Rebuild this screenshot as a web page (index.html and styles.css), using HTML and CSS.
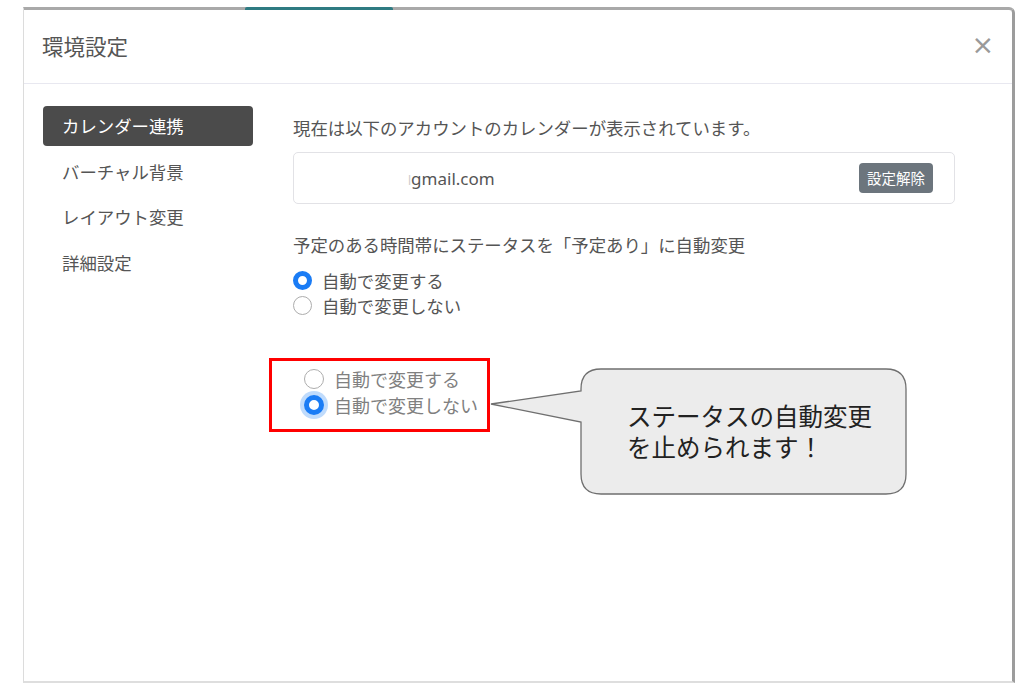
FILE: index.html
```html
<!DOCTYPE html>
<html lang="ja">
<head>
<meta charset="utf-8">
<link rel="stylesheet" href="styles.css">
</head>
<body>
<div class="modal">
  <div class="tab-accent"></div>
  <div class="modal-header">
    <div class="modal-title">環境設定</div>
    <div class="close">×</div>
  </div>
  <div class="modal-body">
    <nav class="sidebar">
      <div class="nav-item active">カレンダー連携</div>
      <div class="nav-item">バーチャル背景</div>
      <div class="nav-item">レイアウト変更</div>
      <div class="nav-item">詳細設定</div>
    </nav>
    <div class="content">
      <p class="text">現在は以下のアカウントのカレンダーが表示されています。</p>
      <div class="account">
        <span class="email"><span class="cut">l</span>gmail.com</span>
        <span class="btn">設定解除</span>
      </div>
      <p class="text label">予定のある時間帯にステータスを「予定あり」に自動変更</p>
      <div class="radios">
        <div class="radio-row"><span class="radio checked"></span><span>自動で変更する</span></div>
        <div class="radio-row"><span class="radio"></span><span>自動で変更しない</span></div>
      </div>
      <div class="highlight">
        <div class="radios light">
          <div class="radio-row"><span class="radio"></span><span>自動で変更する</span></div>
          <div class="radio-row"><span class="radio checked focus"></span><span>自動で変更しない</span></div>
        </div>
      </div>
    </div>
  </div>
</div>
<div class="callout">
  <svg class="callout-shape" width="420" height="130" viewBox="488 366 420 130">
    <path d="M581,391 L581,389 Q581,369 601,369 L886,369 Q906,369 906,389 L906,474 Q906,494 886,494 L601,494 Q581,494 581,474 L581,422 L491,404 Z" fill="#ececec" stroke="#6f6f6f" stroke-width="1.3"/>
  </svg>
  <div class="callout-text">
    <div>ステータスの自動変更</div>
    <div>を止められます！</div>
  </div>
</div>
</body>
</html>
```
FILE: styles.css
```css
* { box-sizing: border-box; }
html, body { margin: 0; padding: 0; background: #fff; }
body {
  font-family: "Noto Sans CJK JP", "Noto Sans", sans-serif;
  color: #555;
  width: 1024px;
  height: 697px;
  position: relative;
  overflow: hidden;
}
.modal {
  position: relative;
  margin: 7px 0 0 23px;
  width: 992px;
  height: 676px;
  background: #fff;
  border-top: 3px solid #a9a9a9;
  border-right: 3px solid #9c9c9c;
  border-left: 1px solid #dcdcdc;
  border-bottom: 2px solid #dedede;
  border-top-right-radius: 6px;
}
.tab-accent {
  position: absolute;
  top: -3px;
  left: 221px;
  width: 148px;
  height: 3px;
  background: #2e7b82;
  border-radius: 2px 2px 0 0;
}
.modal-header {
  height: 74px;
  border-bottom: 1px solid #e8e8f0;
  display: flex;
  align-items: center;
  justify-content: space-between;
  padding: 0 18px 0 18px;
}
.modal-title {
  font-size: 21.5px;
  color: #555;
  padding-bottom: 3px;
}
.close {
  font-family: "DejaVu Sans", sans-serif;
  font-size: 27px;
  color: #9a9a9a;
  line-height: 1;
  padding-bottom: 4px;
}
.modal-body {
  display: flex;
  padding: 22px 0 0 19px;
}
.sidebar {
  width: 210px;
  display: flex;
  flex-direction: column;
  gap: 5.5px;
}
.nav-item {
  height: 40px;
  line-height: 40px;
  padding-left: 19px;
  font-size: 17.4px;
  color: #555;
  border-radius: 4px;
}
.nav-item.active {
  background: #4b4b4b;
  color: #fff;
}
.content {
  margin-left: 40px;
  width: 662px;
  padding-top: 10px;
}
.text {
  margin: 0;
  font-size: 17.4px;
  line-height: 24px;
  color: #555;
}
.account {
  margin-top: 12px;
  height: 52px;
  border: 1px solid #e2e2e6;
  border-radius: 5px;
  display: flex;
  align-items: center;
  justify-content: space-between;
  padding: 0 21px 0 114px;
}
.email {
  font-family: "Noto Sans", sans-serif;
  font-size: 17px;
  color: #555;
}
.cut { color: #ccc; font-size: 12px; }
.btn {
  background: #6c757d;
  color: #fff;
  font-size: 14.5px;
  height: 30px;
  line-height: 30px;
  padding: 0 8px;
  border-radius: 4px;
}
.label { margin-top: 29px; }
.radios { margin-top: 11px; }
.radio-row {
  display: flex;
  align-items: center;
  height: 25px;
  font-size: 17.4px;
  color: #555;
}
.radio {
  width: 19px;
  height: 19px;
  border-radius: 50%;
  border: 1px solid #adadad;
  background: #fff;
  margin-right: 10px;
  flex: none;
}
.radio.checked {
  border: 5.5px solid #1a7cf5;
  background: #fff;
}
.radio.focus {
  box-shadow: 0 0 0 4px rgba(26, 124, 245, 0.28);
}
.highlight {
  margin: 40px 0 0 -24px;
  width: 221px;
  height: 74px;
  border: 3px solid #f00;
  padding: 5px 0 0 32px;
}
.radios.light { margin-top: 0; }
.radios.light .radio-row { height: 26px; color: #808080; font-size: 18px; }
.radios.light .radio { width: 20px; height: 20px; }
.callout {
  position: absolute;
  left: 488px;
  top: 366px;
  width: 420px;
  height: 130px;
}
.callout-shape { display: block; }
.callout-text {
  position: absolute;
  left: 139px;
  top: 34px;
  font-size: 24.5px;
  line-height: 31px;
  color: #222;
}
```
